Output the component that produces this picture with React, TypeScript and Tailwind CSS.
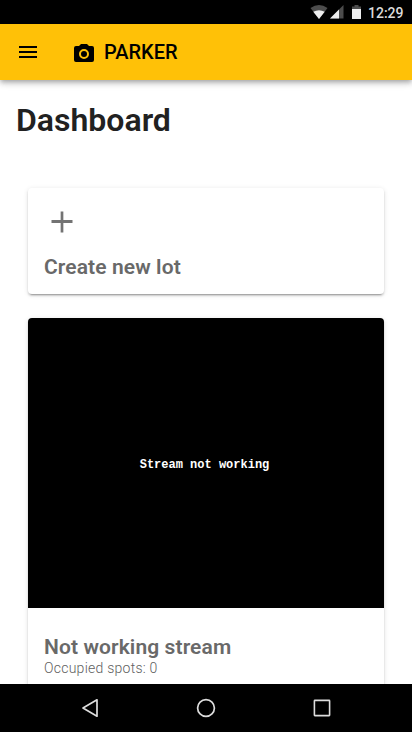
function StatusBar() {
  return (
    <div className="flex h-6 shrink-0 items-center justify-end bg-black pr-2">
      <svg className="h-6 w-[58px]" viewBox="0 0 58 24">
        <path d="M0.5 8Q9 2.2 17.5 8L9 19Z" fill="#4c4c4c" />
        <path d="M3.3 11.8Q9 8.6 14.7 11.8L9 19Z" fill="#eee" />
        <path d="M33.5 5V18.5H20Z" fill="#4c4c4c" />
        <path d="M29 9.5V18.5H20Z" fill="#eee" />
        <path d="M42 6.5H44.5V5H48.5V6.5H51V9H42Z" fill="#4c4c4c" />
        <path d="M42 9H51V19H42Z" fill="#eee" />
      </svg>
      <span className="w-9 pt-px text-[14px] leading-6 font-medium text-[#dcdcdc]">12:29</span>
    </div>
  );
}

function AppBar() {
  return (
    <header className="relative flex h-14 shrink-0 items-center bg-[#ffc107] pl-4 text-black shadow-[0_2px_4px_-1px_rgba(0,0,0,0.2),0_4px_5px_0_rgba(0,0,0,0.14),0_1px_10px_0_rgba(0,0,0,0.12)]">
      <svg className="size-6" viewBox="0 0 24 24" fill="currentColor">
        <path d="M3 18h18v-2H3v2zm0-5h18v-2H3v2zm0-7v2h18V6H3z" />
      </svg>
      <svg className="mt-1 ml-8 size-6" viewBox="0 0 24 24" fill="currentColor">
        <path d="M4 4H7L9 2H15L17 4H20A2 2 0 0 1 22 6V18A2 2 0 0 1 20 20H4A2 2 0 0 1 2 18V6A2 2 0 0 1 4 4M12 7A5 5 0 0 0 7 12A5 5 0 0 0 12 17A5 5 0 0 0 17 12A5 5 0 0 0 12 7M12 9A3 3 0 0 1 15 12A3 3 0 0 1 12 15A3 3 0 0 1 9 12A3 3 0 0 1 12 9Z" />
      </svg>
      <span className="ml-2 text-[20px] leading-8 font-medium">PARKER</span>
    </header>
  );
}

const cardClass =
  "shrink-0 overflow-hidden rounded bg-white text-[#696969] shadow-[0_3px_1px_-2px_rgba(0,0,0,0.2),0_2px_2px_0_rgba(0,0,0,0.14),0_1px_5px_0_rgba(0,0,0,0.12)]";

export default function App() {
  return (
    <div className="flex h-[732px] w-[412px] flex-col overflow-hidden bg-white font-[Roboto,sans-serif]">
      <StatusBar />
      <AppBar />
      <main className="flex min-h-0 flex-1 flex-col overflow-hidden">
        <h1 className="mt-5 ml-4 shrink-0 text-[32px] leading-10 font-semibold text-[#212121]">Dashboard</h1>
        <div className="mx-7 mt-12 flex flex-col gap-6">
          <section className={`${cardClass} h-[106px] px-4 pt-4`}>
            <svg className="size-9" viewBox="0 0 24 24" fill="#737373">
              <path d="M19 12.67H12.9V19h-1.8V12.67H5v-2H11.1V5h1.8v5.67H19z" />
            </svg>
            <h2 className="mt-[11px] text-[21px] leading-8 font-semibold tracking-[0.1px]">Create new lot</h2>
          </section>
          <section className={`${cardClass} h-[400px]`}>
            <div className="flex h-[290px] items-center justify-center bg-black pt-[3px] pr-[3px]">
              <span className="font-['Liberation_Mono',monospace] text-[12px] leading-4 font-bold text-white">
                Stream not working
              </span>
            </div>
            <div className="px-4 pt-[23px]">
              <h2 className="text-[21px] leading-8 font-semibold tracking-[0.1px]">Not working stream</h2>
              <p className="-mt-[5px] text-[14px] leading-5 font-light tracking-[0.25px] text-[#606060]">Occupied spots: 0</p>
            </div>
          </section>
        </div>
      </main>
      <nav className="flex h-12 shrink-0 items-center justify-between bg-black px-[78px]">
        <svg className="size-6" viewBox="0 0 24 24" fill="none" stroke="#ddd" strokeWidth="1.7" strokeLinejoin="round">
          <path d="M19 3.8V20.2L5 12Z" />
        </svg>
        <svg className="size-6" viewBox="0 0 24 24" fill="none" stroke="#ddd" strokeWidth="1.7">
          <circle cx="12" cy="12" r="8.4" />
        </svg>
        <svg className="size-6" viewBox="0 0 24 24" fill="none" stroke="#ddd" strokeWidth="1.6">
          <rect x="4.4" y="4.4" width="15.2" height="15.2" rx="0.5" />
        </svg>
      </nav>
    </div>
  );
}
